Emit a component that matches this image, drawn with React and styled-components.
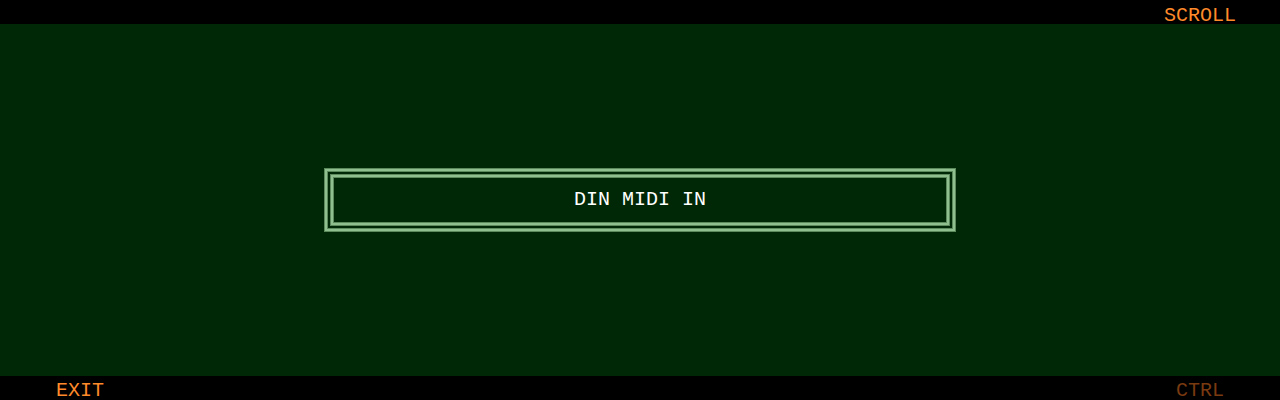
import React from 'react';
import styled, { createGlobalStyle } from 'styled-components';

const GlobalStyle = createGlobalStyle`
  html, body {
    margin: 0;
    padding: 0;
    background: #000;
  }
`;

const Screen = styled.div`
  display: flex;
  flex-direction: column;
  width: 1280px;
  height: 400px;
  background: #000;
  font-family: "Liberation Mono", "DejaVu Sans Mono", monospace;
  font-size: 20px;
  overflow: hidden;
`;

const Bar = styled.div`
  display: grid;
  grid-template-columns: repeat(8, 160px);
  height: 24px;
  background: #000;
  flex: none;
`;

const Slot = styled.div`
  box-sizing: border-box;
  height: 24px;
  padding-top: ${(p) => p.$top}px;
  line-height: ${(p) => p.$lh}px;
  text-align: center;
  color: ${(p) => (p.$dim ? '#7a3a10' : '#ff8a2a')};
  white-space: pre;
`;

const Main = styled.div`
  flex: 1;
  display: flex;
  align-items: center;
  justify-content: center;
  background: #002806;
`;

const Frame = styled.div`
  box-sizing: border-box;
  width: 632px;
  height: 64px;
  border: 1px solid #5c8a5c;
  box-shadow: inset 0 0 0 2px #8fbf8f, inset 0 0 0 3px #5c8a5c;
  padding: 5px;
  display: flex;
`;

const Inner = styled.div`
  box-sizing: border-box;
  flex: 1;
  border: 1px solid #5c8a5c;
  box-shadow: inset 0 0 0 2px #8fbf8f, inset 0 0 0 3px #5c8a5c;
  display: flex;
  align-items: center;
  justify-content: center;
  color: #fff;
  line-height: 24px;
`;

const topSlots = ['', '', '', '', '', '', '', 'SCROLL'];
const bottomSlots = [
  { label: 'EXIT' },
  { label: '' },
  { label: '' },
  { label: '' },
  { label: '' },
  { label: '' },
  { label: '' },
  { label: 'CTRL', dim: true },
];

export default function App() {
  return (
    <>
      <GlobalStyle />
      <Screen>
        <Bar>
          {topSlots.map((t, i) => (
            <Slot key={i} $top={7} $lh={17}>{t}</Slot>
          ))}
        </Bar>
        <Main>
          <Frame>
            <Inner>DIN MIDI IN</Inner>
          </Frame>
        </Main>
        <Bar>
          {bottomSlots.map((s, i) => (
            <Slot key={i} $top={6} $lh={18} $dim={s.dim}>{s.label}</Slot>
          ))}
        </Bar>
      </Screen>
    </>
  );
}
